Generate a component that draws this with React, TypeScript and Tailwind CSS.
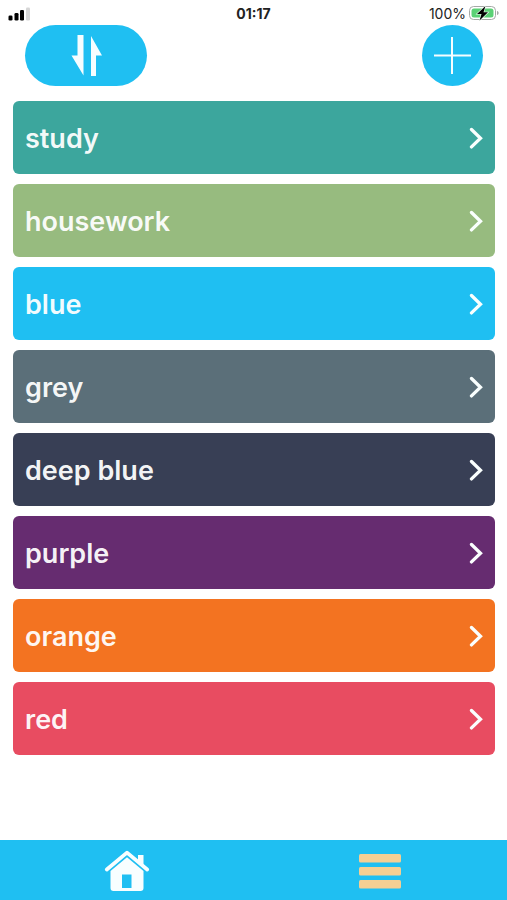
interface Category {
  name: string;
  color: string;
}

const categories: Category[] = [
  { name: 'study', color: 'bg-[#3ca69d]' },
  { name: 'housework', color: 'bg-[#97bb7f]' },
  { name: 'blue', color: 'bg-[#1fbff2]' },
  { name: 'grey', color: 'bg-[#5b6f79]' },
  { name: 'deep blue', color: 'bg-[#383f55]' },
  { name: 'purple', color: 'bg-[#662c70]' },
  { name: 'orange', color: 'bg-[#f37321]' },
  { name: 'red', color: 'bg-[#e84c61]' },
];

function StatusBar() {
  return (
    <div className="grid h-[25px] grid-cols-3 items-center px-2 pt-[2px] text-[14px] leading-none text-[#222]">
      <svg width="22" height="14" viewBox="0 0 22 14" aria-hidden="true">
        <rect x="0.5" y="8.5" width="4" height="5" rx="1.3" fill="#000" />
        <rect x="6.5" y="6" width="4" height="7.5" rx="1.3" fill="#000" />
        <rect x="12" y="3" width="4" height="10.5" rx="1.3" fill="#000" />
        <rect x="18" y="0.5" width="4" height="13" rx="1.3" fill="#d6d6d6" />
      </svg>
      <span className="text-center font-bold">01:17</span>
      <div className="flex items-center justify-end gap-[3px]">
        <span>100%</span>
        <svg width="30" height="16" viewBox="0 0 30 16" aria-hidden="true">
          <rect x="0.5" y="0.5" width="26" height="13" rx="4" fill="#fff" stroke="#a5a9a6" />
          <rect x="2.5" y="2.5" width="22" height="9" rx="2.5" fill="#5bd175" />
          <path d="M28 5v4c1.2-.4 1.6-1.1 1.6-2S29.2 5.400 28 5z" fill="#a5a9a6" />
          <path
            d="M16.500 0 8 8h4.500l-2 6.500L19 6.300h-4.500z"
            fill="#000"
            stroke="#eefcf0"
            strokeWidth="1.2"
            paintOrder="stroke"
          />
        </svg>
      </div>
    </div>
  );
}

function Toolbar() {
  return (
    <header className="flex justify-between pr-6 pl-[25px]">
      <button
        type="button"
        aria-label="Sort"
        className="flex h-[61px] w-[122px] items-center justify-center rounded-full bg-[#1fbff2]"
      >
        <svg width="32" height="42" viewBox="0 0 32 42" fill="#f6fdff" aria-hidden="true">
          <path d="M7.500 0h6v40.500L1.500 20.500h6z" />
          <path d="M21 1 32 20.500h-6v20.500h-5z" />
        </svg>
      </button>
      <button
        type="button"
        aria-label="Add"
        className="flex size-[61px] items-center justify-center rounded-full bg-[#1fbff2]"
      >
        <svg width="37" height="37" viewBox="0 0 37 37" stroke="#f6fdff" strokeWidth="2" aria-hidden="true">
          <path d="M18 0v37M0 18.500h37" />
        </svg>
      </button>
    </header>
  );
}

function CategoryRow({ name, color }: Category) {
  return (
    <li>
      <button
        type="button"
        className={`flex h-[73px] w-full items-center justify-between rounded-md px-3 text-left text-[27px] font-semibold text-white/95 ${color}`}
      >
        <span className="pt-1">{name}</span>
        <svg width="14" height="22" viewBox="0 0 14 22" fill="none" aria-hidden="true">
          <path
            d="M2.500 2.500 11.500 11.200l-9 8.700"
            stroke="#fafffe"
            strokeWidth="3.300"
            strokeLinecap="round"
            strokeLinejoin="miter"
          />
        </svg>
      </button>
    </li>
  );
}

function TabBar() {
  return (
    <nav className="grid h-[60px] grid-cols-2 bg-[#1fbff2] pt-[2px]">
      <button type="button" aria-label="Home" className="flex items-center justify-center">
        <svg width="46" height="42" viewBox="0 0 46 42" aria-hidden="true">
          <path d="M34 5h5.500v12l-5.500-4.500z" fill="#f8feff" />
          <path
            d="M2.800 19.500 23 2.600l20.200 16.900"
            fill="none"
            stroke="#f8feff"
            strokeWidth="3.800"
            strokeLinecap="round"
            strokeLinejoin="round"
          />
          <path
            fillRule="evenodd"
            d="M23 7.200 39.500 21v17a3 3 0 0 1-3 3h-27a3 3 0 0 1-3-3V21zM18 24.500v13.500h9.500v-13.500z"
            fill="#f8feff"
          />
        </svg>
      </button>
      <button type="button" aria-label="Menu" className="flex items-center justify-center">
        <svg width="42" height="35" viewBox="0 0 42 35" fill="#f5cf93" aria-hidden="true">
          <rect width="42" height="8.500" rx="1.500" />
          <rect y="13" width="42" height="8.500" rx="1.500" />
          <rect y="26" width="42" height="8.500" rx="1.500" />
        </svg>
      </button>
    </nav>
  );
}

export default function App() {
  return (
    <div className="flex min-h-screen flex-col bg-white font-['Inter','Liberation_Sans',sans-serif]">
      <StatusBar />
      <Toolbar />
      <main className="flex-1 pt-[15px] pr-3 pb-4 pl-[13px]">
        <ul className="flex flex-col gap-[10px]">
          {categories.map((category) => (
            <CategoryRow key={category.name} {...category} />
          ))}
        </ul>
      </main>
      <TabBar />
    </div>
  );
}
